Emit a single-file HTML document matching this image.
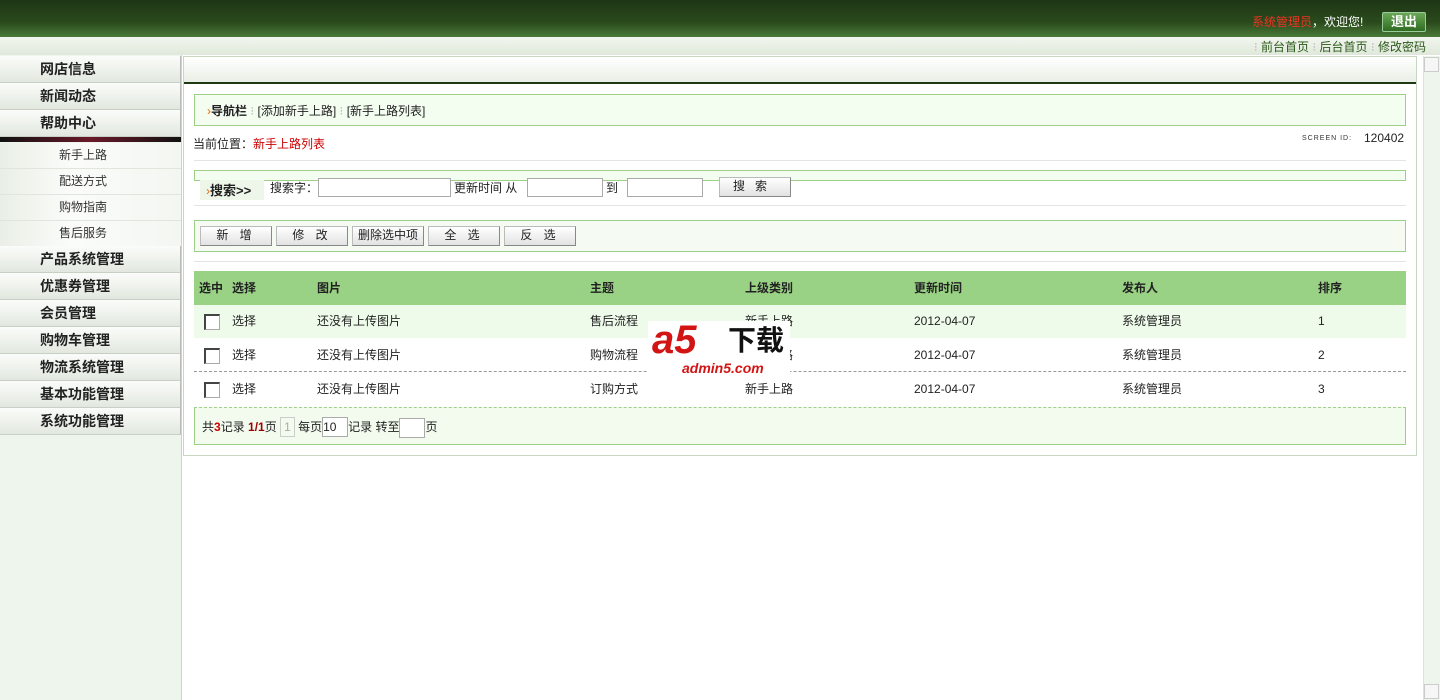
<!DOCTYPE html>
<html><head><meta charset="utf-8"><style>
*{margin:0;padding:0;box-sizing:border-box}
body{width:1440px;height:700px;overflow:hidden;background:#fff;font:12px "Liberation Sans","Noto Sans CJK SC",sans-serif;color:#222;position:relative}
.abs{position:absolute}
#top{left:0;top:0;width:1440px;height:37px;background:linear-gradient(#1e3516,#2a4a1c 60%,#4a7a38)}
#strip{left:0;top:37px;width:1440px;height:18px;background:linear-gradient(#f2f6ef,#dfe8da)}
#side{left:0;top:55px;width:182px;height:645px;background:#eef5ec;border-right:1px solid #c9d6c4}
.m{position:absolute;left:0;width:181px;height:27px;background:linear-gradient(#fbfcfa,#e2e8df);border-bottom:1px solid #c8cfc4;border-right:1px solid #bbb;font-weight:bold;font-size:14px;line-height:26px;padding-left:40px;color:#222}
.s{position:absolute;left:0;width:181px;height:26px;border-bottom:1px solid #e0e6dc;line-height:25px;padding-left:59px;color:#333;background:linear-gradient(90deg,#e9efe6,#fbfcfa 40%,#f3f6f1)}
#main{left:183px;top:56px;width:1234px;height:400px;border:1px solid #c8d8c0;background:#fff}
.box{position:absolute;border:1px solid #9fcf86;background:#f3fdf0}
.btn{position:absolute;height:20px;width:72px;border:1px solid #bbb;border-right-color:#888;border-bottom-color:#888;background:linear-gradient(#fff,#e2e2e2);text-align:center;line-height:16px;letter-spacing:4px}
.inp{position:absolute;height:19px;border:1px solid #aaa;background:#fff}
.row{position:absolute;left:194px;width:1212px;height:33px;line-height:32px}
.row span,.hd span{position:absolute}
.cb{position:absolute;left:10px;top:9px;width:16px;height:16px;border:1px solid #aaa;border-top:2px solid #444;border-left:2px solid #444;background:#fff}
</style></head><body>
<div id="top" class="abs"></div>
<div class="abs" style="left:1252px;top:13px;color:#fff"><span style="color:#e32">系统管理员</span>，欢迎您!</div>
<div class="abs" style="left:1382px;top:12px;width:44px;height:20px;background:linear-gradient(#6aa856,#2f6c22);border:1px solid #9c9;border-radius:2px;color:#fff;font-weight:bold;font-size:13px;text-align:center;line-height:18px">退出</div>
<div id="strip" class="abs"></div>
<div class="abs" style="right:14px;top:38px;color:#2b5a1a"><span style="color:#bbb">⁝</span> 前台首页 <span style="color:#bbb">⁝</span> 后台首页 <span style="color:#bbb">⁝</span> 修改密码</div>
<div id="side" class="abs"></div>
<div class="m" style="top:56px">网店信息</div>
<div class="m" style="top:83px">新闻动态</div>
<div class="m" style="top:110px">帮助中心</div>
<div class="abs" style="left:0;top:137px;width:181px;height:5px;background:linear-gradient(90deg,#111,#6a1a2a 50%,#111)"></div>
<div class="s" style="top:143px">新手上路</div>
<div class="s" style="top:169px">配送方式</div>
<div class="s" style="top:195px">购物指南</div>
<div class="s" style="top:221px">售后服务</div>
<div class="m" style="top:246px">产品系统管理</div>
<div class="m" style="top:273px">优惠券管理</div>
<div class="m" style="top:300px">会员管理</div>
<div class="m" style="top:327px">购物车管理</div>
<div class="m" style="top:354px">物流系统管理</div>
<div class="m" style="top:381px">基本功能管理</div>
<div class="m" style="top:408px">系统功能管理</div>
<div id="main" class="abs">
<div class="abs" style="left:0;top:0;width:1232px;height:25px;background:linear-gradient(#fff,#e9efe6)"></div>
<div class="abs" style="left:0;top:25px;width:1232px;height:2px;background:#1e3a14"></div>
</div>
<div class="abs" style="left:1423px;top:56px;width:17px;height:644px;background:#eef5ec;border-left:1px solid #dde"></div>
<div class="abs" style="left:1424px;top:57px;width:15px;height:15px;border:1px solid #ccc;background:#f6f6f6"></div>
<div class="abs" style="left:1424px;top:684px;width:15px;height:15px;border:1px solid #ccc;background:#f6f6f6"></div>
<div class="box" style="left:194px;top:94px;width:1212px;height:32px"></div>
<div class="abs" style="left:207px;top:102px"><span style="color:#e60">›</span><b>导航栏</b> <span style="color:#bbb">⁝</span> [添加新手上路] <span style="color:#bbb">⁝</span> [新手上路列表]</div>
<div class="abs" style="left:193px;top:135px">当前位置：<span style="color:#c00">新手上路列表</span></div>
<div class="abs" style="left:1302px;top:135px;font-size:7px;color:#333;letter-spacing:1px">SCREEN ID:</div>
<div class="abs" style="left:1364px;top:131px">120402</div>
<div class="abs" style="left:194px;top:160px;width:1212px;height:1px;background:#e4e4e4"></div>
<div class="box" style="left:194px;top:170px;width:1212px;height:11px;border-bottom:1px solid #9fcf86"></div>
<div class="abs" style="left:200px;top:180px;width:64px;height:20px;background:#eef6ea"></div>
<div class="abs" style="left:206px;top:180px"><span style="color:#e60">›</span><b style="font-size:13px">搜索&gt;&gt;</b></div>
<div class="abs" style="left:270px;top:179px">搜索字：</div>
<div class="inp" style="left:318px;top:178px;width:133px"></div>
<div class="abs" style="left:454px;top:179px">更新时间 从</div>
<div class="inp" style="left:527px;top:178px;width:76px"></div>
<div class="abs" style="left:606px;top:179px">到</div>
<div class="inp" style="left:627px;top:178px;width:76px"></div>
<div class="btn" style="left:719px;top:177px;letter-spacing:10px">搜索</div>
<div class="abs" style="left:194px;top:205px;width:1212px;height:1px;background:#e4e4e4"></div>
<div class="box" style="left:194px;top:220px;width:1212px;height:32px;background:#f5fbf2"></div>
<div class="btn" style="left:200px;top:226px">新 增</div>
<div class="btn" style="left:276px;top:226px">修 改</div>
<div class="btn" style="left:352px;top:226px;letter-spacing:0">删除选中项</div>
<div class="btn" style="left:428px;top:226px">全 选</div>
<div class="btn" style="left:504px;top:226px">反 选</div>
<div class="abs" style="left:194px;top:261px;width:1212px;height:1px;background:#e4e4e4"></div>
<div class="abs hd" style="left:194px;top:271px;width:1212px;height:34px;background:#9ad285;line-height:34px;font-weight:bold">
<span style="left:5px">选中</span><span style="left:38px">选择</span><span style="left:123px">图片</span><span style="left:396px">主题</span><span style="left:551px">上级类别</span><span style="left:720px">更新时间</span><span style="left:928px">发布人</span><span style="left:1124px">排序</span></div>
<div class="row" style="top:305px;background:#effbea"><div class="cb"></div><span style="left:38px">选择</span><span style="left:123px">还没有上传图片</span><span style="left:396px">售后流程</span><span style="left:551px">新手上路</span><span style="left:720px">2012-04-07</span><span style="left:928px">系统管理员</span><span style="left:1124px">1</span></div>
<div class="row" style="top:339px;border-bottom:1px dashed #999"><div class="cb"></div><span style="left:38px">选择</span><span style="left:123px">还没有上传图片</span><span style="left:396px">购物流程</span><span style="left:551px">新手上路</span><span style="left:720px">2012-04-07</span><span style="left:928px">系统管理员</span><span style="left:1124px">2</span></div>
<div class="row" style="top:373px"><div class="cb"></div><span style="left:38px">选择</span><span style="left:123px">还没有上传图片</span><span style="left:396px">订购方式</span><span style="left:551px">新手上路</span><span style="left:720px">2012-04-07</span><span style="left:928px">系统管理员</span><span style="left:1124px">3</span></div>
<div class="box" style="left:194px;top:407px;width:1212px;height:38px;border-top:1px dashed #9fcf86;background:#f3fbef"></div>
<div class="abs" style="left:202px;top:417px">共<b style="color:#c00">3</b>记录 <b style="color:#900">1/1</b>页 <span style="display:inline-block;border:1px solid #ccc;color:#aaa;padding:0 3px;line-height:18px">1</span> 每页<span style="display:inline-block;border:1px solid #aaa;width:26px;line-height:18px;background:#fff">10</span>记录 转至<span style="display:inline-block;border:1px solid #aaa;width:26px;height:20px;vertical-align:middle;background:#fff"></span>页</div>
<div class="abs" style="left:648px;top:321px;width:142px;height:56px;background:#fff"></div>
<div class="abs" style="left:652px;top:318px;font:italic bold 40px 'Liberation Sans',sans-serif;color:#d21414">a5</div>
<div class="abs" style="left:728px;top:326px;font-weight:bold;font-size:28px;line-height:30px;color:#111">下载</div>
<div class="abs" style="left:682px;top:360px;font:italic bold 14px 'Liberation Sans',sans-serif;color:#d21414">admin5.com</div>
</body></html>
